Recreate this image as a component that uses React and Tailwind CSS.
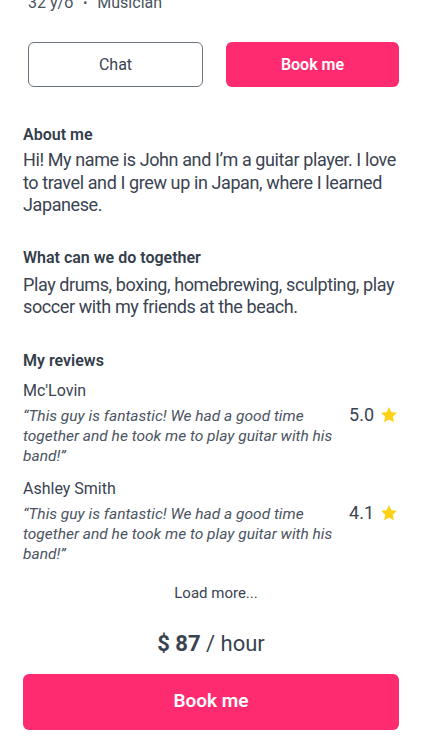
import React from "react";

const reviews = [
  {
    name: "Mc'Lovin",
    text: "“This guy is fantastic! We had a good time together and he took me to play guitar with his band!”",
    rating: "5.0",
  },
  {
    name: "Ashley Smith",
    text: "“This guy is fantastic! We had a good time together and he took me to play guitar with his band!”",
    rating: "4.1",
  },
];

function Star() {
  return (
    <svg viewBox="0 0 24 24" className="h-[20px] w-[20px]" fill="#fcd116">
      <path d="M12 2.5l2.9 6.1 6.6.8-4.9 4.6 1.3 6.6L12 17.3l-5.9 3.3 1.3-6.6-4.9-4.6 6.6-.8z" />
    </svg>
  );
}

export default function App() {
  return (
    <div
      className="min-h-[750px] w-[422px] overflow-hidden bg-white text-[#3a4351]"
      style={{ fontFamily: "Roboto, 'Noto Sans', sans-serif" }}
    >
      <div className="mt-[-7px] pl-[28px] pr-[23px]">
        <div className="flex items-center text-[16px] leading-[20px] text-[#4a5361]">
          <span>32 y/o</span>
          <span className="mx-[10px] text-[12px]">•</span>
          <span>Musician</span>
        </div>
        {/* Actions */}
        <div className="mt-[29px] flex gap-[23px]">
          <button className="h-[45px] flex-1 rounded-[6px] border border-[#6b7280] text-[16px] text-[#3a4351]">
            Chat
          </button>
          <button className="h-[45px] flex-1 rounded-[6px] bg-[#fe2b70] text-[16px] font-semibold text-white">
            Book me
          </button>
        </div>
      </div>

      <div className="px-[23px]">
        {/* About */}
        <h4 className="mt-[38px] text-[16px] font-semibold leading-[20px] text-[#343d4b]">About me</h4>
        <p className="mt-[4px] text-[18px] leading-[22.5px] tracking-[-0.4px]">
          Hi! My name is John and I’m a guitar player. I love to travel and I grew up in Japan, where I learned Japanese.
        </p>

        <h4 className="mt-[31px] text-[16px] font-semibold leading-[20px] text-[#343d4b]">
          What can we do together
        </h4>
        <p className="mt-[6px] text-[18px] leading-[22px] tracking-[-0.4px]">
          Play drums, boxing, homebrewing, sculpting, play soccer with my friends at the beach.
        </p>

        {/* Reviews */}
        <h4 className="mt-[33px] text-[16px] font-semibold leading-[20px] text-[#343d4b]">My reviews</h4>
        <div className="mt-[9px] flex flex-col gap-[12px]">
          {reviews.map((r) => (
            <div key={r.name}>
              <div className="text-[16px] leading-[22px]">{r.name}</div>
              <div className="mt-[4px] flex items-start justify-between">
                <p className="w-[318px] text-[15.5px] italic leading-[20px] text-[#4b5462]">{r.text}</p>
                <div className="mt-[-2px] flex items-center gap-[5px] text-[18px] leading-[22px]">
                  <span>{r.rating}</span>
                  <Star />
                </div>
              </div>
            </div>
          ))}
        </div>

        <div className="mt-[19px] pl-[10px] text-center text-[15px] leading-[20px]">Load more...</div>

        <div className="mt-[26px] text-center text-[22px] leading-[30px]">
          <span className="font-bold">$ 87</span> / hour
        </div>

        <button className="mt-[15px] h-[56px] w-full rounded-[6px] bg-[#fe2b70] text-[19px] font-semibold text-white">
          Book me
        </button>
      </div>
    </div>
  );
}
